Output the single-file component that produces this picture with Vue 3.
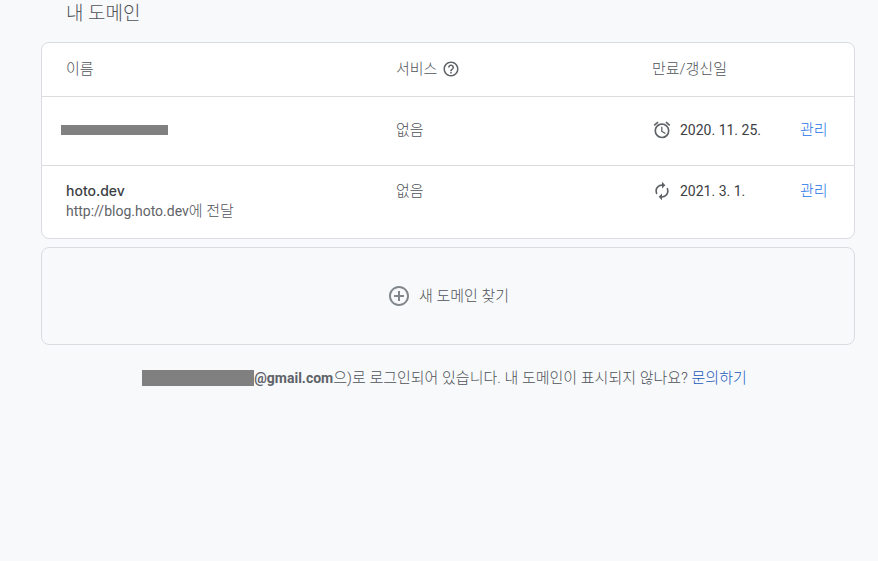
<script setup>
const domains = [
  { name: '', note: '', service: '없음', date: '2020. 11. 25.', renews: false },
  { name: 'hoto.dev', note: { url: 'http://blog.hoto.dev', rest: '에 전달' }, service: '없음', date: '2021. 3. 1.', renews: true },
]
</script>

<template>
  <main class="page">
    <h1 class="title">내 도메인</h1>

    <section class="card">
      <table class="domains">
        <colgroup>
          <col />
          <col class="col-service" />
          <col class="col-date" />
          <col class="col-action" />
        </colgroup>
        <thead>
          <tr>
            <th scope="col">이름</th>
            <th scope="col">
              <span class="inline">
                서비스
                <button class="help" type="button" aria-label="도움말">
                  <svg viewBox="0 0 24 24" width="18" height="18"><path d="M11 18h2v-2h-2v2zm1-16C6.48 2 2 6.48 2 12s4.48 10 10 10 10-4.48 10-10S17.52 2 12 2zm0 18c-4.41 0-8-3.59-8-8s3.59-8 8-8 8 3.59 8 8-3.59 8-8 8zm0-14c-2.21 0-4 1.79-4 4h2c0-1.1.9-2 2-2s2 .9 2 2c0 2-3 1.75-3 5h2c0-2.25 3-2.5 3-5 0-2.21-1.79-4-4-4z" /></svg>
                </button>
              </span>
            </th>
            <th scope="col">만료/갱신일</th>
            <th></th>
          </tr>
        </thead>
        <tbody>
          <tr v-for="d in domains" :key="d.date" :class="{ detailed: d.name }">
            <td>
              <template v-if="d.name">
                <div class="name">{{ d.name }}</div>
                <div class="note"><span class="latin">{{ d.note.url }}</span>{{ d.note.rest }}</div>
              </template>
              <div v-else class="redacted"></div>
            </td>
            <td>{{ d.service }}</td>
            <td>
              <span class="date">
                <svg v-if="d.renews" viewBox="0 0 24 24" width="20" height="20"><path d="M12 6v3l4-4-4-4v3c-4.42 0-8 3.58-8 8 0 1.57.46 3.03 1.24 4.26L6.7 14.8A5.87 5.87 0 0 1 6 12c0-3.31 2.69-6 6-6zm6.76 1.74L17.3 9.2c.44.84.7 1.79.7 2.8 0 3.31-2.69 6-6 6v-3l-4 4 4 4v-3c4.42 0 8-3.58 8-8 0-1.57-.46-3.03-1.24-4.26z" /></svg>
                <svg v-else viewBox="0 0 24 24" width="20" height="20"><path d="M22 5.72l-4.6-3.86-1.29 1.53 4.6 3.86L22 5.72zM7.88 3.39L6.6 1.86 2 5.71l1.29 1.53 4.59-3.85zM12.5 8H11v6l4.75 2.85.75-1.23-4-2.37V8zM12 4c-4.97 0-9 4.03-9 9s4.02 9 9 9a9 9 0 0 0 0-18zm0 16c-3.87 0-7-3.13-7-7s3.13-7 7-7 7 3.13 7 7-3.13 7-7 7z" /></svg>
                {{ d.date }}
              </span>
            </td>
            <td><a class="link" href="#">관리</a></td>
          </tr>
        </tbody>
      </table>
    </section>

    <button class="find" type="button">
      <svg viewBox="0 0 24 24" width="24" height="24"><path d="M13 7h-2v4H7v2h4v4h2v-4h4v-2h-4V7zm-1-5C6.48 2 2 6.48 2 12s4.48 10 10 10 10-4.48 10-10S17.52 2 12 2zm0 18c-4.41 0-8-3.59-8-8s3.59-8 8-8 8 3.59 8 8-3.59 8-8 8z" /></svg>
      새 도메인 찾기
    </button>

    <p class="account">
      <span class="mask"></span><strong>@gmail.com</strong><span>으)로 로그인되어 있습니다. 내 도메인이 표시되지 않나요?&nbsp;</span><a class="contact" href="#">문의하기</a>
    </p>
  </main>
</template>

<style>
body {
  background: #f8f9fb;
}
</style>

<style scoped>
.page {
  padding: 0 23px 0 41px;
  font-family: Roboto, "Noto Sans CJK KR", sans-serif;
  font-size: 15px;
  line-height: 20px;
  font-weight: 300;
  color: #4f5358;
}
.title {
  margin: 0;
  padding: 0 0 14px 25px;
  font-size: 19px;
  line-height: 28px;
  font-weight: 300;
}
svg {
  display: block;
  flex: none;
  fill: #5f6368;
}
.card {
  border: 1px solid #dadce0;
  border-radius: 8px;
  background: #fff;
}
.domains {
  width: 100%;
  table-layout: fixed;
  border-collapse: collapse;
}
.col-service {
  width: 256px;
}
.col-date {
  width: 148px;
}
.col-action {
  width: 78px;
}
th,
td {
  padding: 0 0 2px 24px;
  text-align: left;
  font-weight: 300;
  white-space: nowrap;
}
th {
  height: 51px;
}
td {
  height: 66px;
  border-top: 1px solid #dadce0;
}
.detailed td {
  height: auto;
  padding-top: 15px;
  padding-bottom: 17px;
  vertical-align: top;
}
.inline {
  display: flex;
  align-items: center;
  gap: 5px;
}
.help {
  padding: 0;
  border: 0;
  background: none;
  color: inherit;
}
.redacted {
  width: 107px;
  height: 10px;
  margin-left: -5px;
  background: #808080;
}
.name {
  font-family: Inter, sans-serif;
  font-size: 14px;
  font-weight: 500;
  color: #3c4043;
}
.latin,
.date {
  font-size: 14px;
  font-weight: 400;
}
.latin {
  color: #5f6368;
}
.date {
  display: flex;
  align-items: center;
  gap: 8px;
  color: #3c4043;
}
.link {
  color: #1a73e8;
  text-decoration: none;
}
.find {
  display: flex;
  align-items: center;
  justify-content: center;
  gap: 8px;
  box-sizing: border-box;
  width: 100%;
  margin: 8px 0 0;
  padding: 36px 0;
  border: 1px solid #dadce0;
  border-radius: 8px;
  background: transparent;
  font: inherit;
  line-height: 24px;
  color: inherit;
}
.find svg {
  fill: #80868b;
}
.account {
  display: flex;
  align-items: center;
  justify-content: center;
  margin: 23px 0 0;
  padding-right: 7px;
  white-space: nowrap;
}
.account strong {
  font-size: 14px;
  font-weight: 700;
  color: #5f6368;
}
.mask {
  width: 112px;
  height: 16px;
  background: #808080;
}
.contact {
  color: #185abc;
  text-decoration: none;
}
</style>
